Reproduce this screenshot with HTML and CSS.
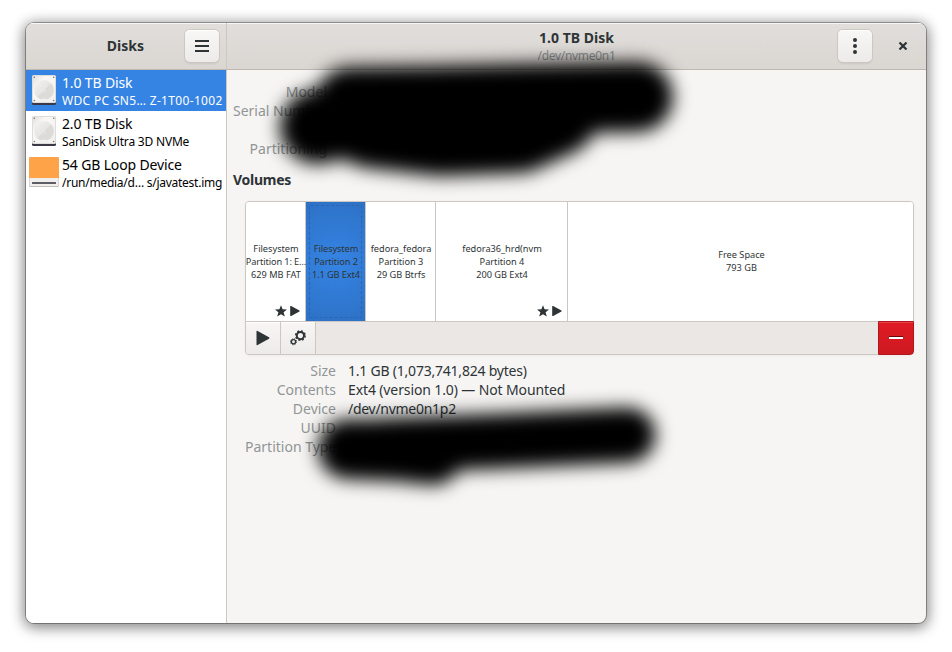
FILE: index.html
```html
<!DOCTYPE html>
<html lang="en">
<head>
<meta charset="utf-8">
<title>Disks</title>
<link rel="stylesheet" href="styles.css">
</head>
<body>
<svg class="defs" width="0" height="0" aria-hidden="true">
  <defs>
    <linearGradient id="metal" x1="0" y1="0" x2="1" y2="1"><stop offset="0" stop-color="#e0dfdc"/><stop offset=".3" stop-color="#f9f8f7"/><stop offset="1" stop-color="#f1f0ee"/></linearGradient>
    <linearGradient id="platter" x1="0" y1="0" x2="1" y2="1"><stop offset="0" stop-color="#f4f3f2"/><stop offset=".5" stop-color="#e6e5e2"/><stop offset=".52" stop-color="#dcdbd7"/><stop offset="1" stop-color="#dcdbd7"/></linearGradient>
    <symbol id="hdd" viewBox="0 0 24 30">
      <rect x="0" y="1" width="24" height="29" rx="1.5" fill="#3d3846"/>
      <rect x="0" y="0" width="24" height="28" rx="1.5" fill="#deddda"/>
      <rect x="1" y="1" width="22" height="26" rx="1" fill="url(#metal)"/>
      <circle cx="12" cy="15" r="10" fill="url(#platter)"/>
      <circle cx="12" cy="16" r="1.5" fill="#f3f2f0"/><circle cx="12" cy="16" r=".6" fill="#aaa"/>
      <path d="M8 27a4 3.500 0 0 1 8 0z" fill="#f1f0ee"/>
      <g fill="#77767b"><circle cx="2.3" cy="2.3" r=".8"/><circle cx="21.7" cy="2.3" r=".8"/><circle cx="2.3" cy="25.5" r=".8"/><circle cx="21.7" cy="25.5" r=".8"/></g>
    </symbol>
    <symbol id="loop" viewBox="0 0 30 30">
      <rect width="30" height="30" rx="1.5" fill="#c0bfbc"/>
      <rect x=".5" y="20" width="29" height="9" rx="1" fill="#f0efed"/>
      <path d="M0 21V1.5Q0 0 1.500 0H28.500Q30 0 30 1.500V21Z" fill="#ffa348"/>
      <rect x="3" y="25" width="24" height="2" rx=".5" fill="#5e5c64"/>
    </symbol>
    <symbol id="flags" viewBox="0 0 26 12">
      <path d="M6 .2 7.600 4.300 12 4.500 8.600 7.200 9.800 11.600 6 9.200 2.200 11.600 3.400 7.200 0 4.500 4.400 4.300Z" fill="#2e3436"/>
      <path d="M15.200 1.600Q15.200 .6 16.200 1L24.400 5.500Q25.200 6 24.400 6.500L16.200 11Q15.200 11.400 15.200 10.400Z" fill="#2e3436"/>
    </symbol>
  </defs>
</svg>
<main class="window">
  <header class="titlebar">
    <div class="side-head">
      <span class="title app">Disks</span>
      <button class="btn"><svg width="14" height="12"><path d="M0 1H14M0 6H14M0 11H14" stroke="#2e3436" stroke-width="2"/></svg></button>
    </div>
    <div class="main-head">
      <div class="titles"><div class="title disk">1.0 TB Disk</div><div class="subtitle">/dev/nvme0n1</div></div>
      <button class="btn menu"><svg width="4" height="16" fill="#2e3436"><circle cx="2" cy="2" r="2"/><circle cx="2" cy="8" r="2"/><circle cx="2" cy="14" r="2"/></svg></button>
      <button class="close"><svg width="10" height="8"><path d="M1.500 .5 8.500 7.500M8.500 .5 1.500 7.500" stroke="#2e3436" stroke-width="2.200"/></svg></button>
    </div>
  </header>
  <div class="body">
    <aside class="sidebar">
      <div class="device selected"><svg class="icon"><use href="#hdd"/></svg><div class="dtext"><div class="name n1">1.0 TB Disk</div><div class="info i1">WDC PC SN5… Z-1T00-1002</div></div></div>
      <div class="device"><svg class="icon"><use href="#hdd"/></svg><div class="dtext"><div class="name n2">2.0 TB Disk</div><div class="info i2">SanDisk Ultra 3D NVMe</div></div></div>
      <div class="device"><svg class="icon"><use href="#loop"/></svg><div class="dtext"><div class="name n3">54 GB Loop Device</div><div class="info i3">/run/media/d… s/javatest.img</div></div></div>
    </aside>
    <section class="content">
      <dl class="facts drive">
        <dt>Model</dt><dd></dd>
        <dt>Serial Number</dt><dd></dd>
        <dt></dt><dd></dd>
        <dt>Partitioning</dt><dd></dd>
      </dl>
      <h2>Volumes</h2>
      <div class="volumes">
        <div class="grid">
          <div class="part"><p>Filesystem</p><p class="wide">Partition 1: E…</p><p>629 MB FAT</p><svg class="flags"><use href="#flags"/></svg></div>
          <div class="part active"><p>Filesystem</p><p>Partition 2</p><p>1.1 GB Ext4</p></div>
          <div class="part"><p>fedora_fedora</p><p>Partition 3</p><p>29 GB Btrfs</p></div>
          <div class="part"><p>fedora36_hrd(nvm</p><p>Partition 4</p><p>200 GB Ext4</p><svg class="flags"><use href="#flags"/></svg></div>
          <div class="part"><p>Free Space</p><p>793 GB</p></div>
        </div>
        <div class="toolbar">
          <button class="tool"><svg width="14" height="16"><path d="M.5 1.600Q.5 .4 1.600 1L13 7.300Q14 8 13 8.700L1.600 15Q.5 15.600 .5 14.400Z" fill="#2e3436"/></svg></button>
          <button class="tool"><svg width="16" height="16" fill="none" stroke="#2e3436"><circle cx="10.400" cy="5.600" r="3.600" stroke-width="2"/><circle cx="10.400" cy="5.600" r="4.800" stroke-width="1.400" stroke-dasharray="1.900 1.870"/><circle cx="3.500" cy="11.800" r="2.100" stroke-width="1.300"/><circle cx="3.500" cy="11.800" r="3" stroke-width="1" stroke-dasharray="1.200 1.156"/></svg></button>
          <button class="remove"><svg width="14" height="4"><path d="M0 .5H14" stroke="#5e0b10"/><path d="M0 2H14" stroke="#fff" stroke-width="2"/></svg></button>
        </div>
      </div>
      <dl class="facts volume">
        <dt class="t1">Size</dt><dd class="v1">1.1 GB (1,073,741,824 bytes)</dd>
        <dt class="t2">Contents</dt><dd class="v2">Ext4 (version 1.0) — Not Mounted</dd>
        <dt class="t3">Device</dt><dd class="v3">/dev/nvme0n1p2</dd>
        <dt>UUID</dt><dd></dd>
        <dt class="t5">Partition Type</dt><dd></dd>
      </dl>
    </section>
  </div>
</main>
<svg class="redaction" width="952" height="652" viewBox="0 0 952 652" aria-hidden="true">
  <defs><filter id="soft" filterUnits="userSpaceOnUse" x="0" y="0" width="952" height="652"><feGaussianBlur stdDeviation="9"/></filter></defs>
  <g filter="url(#soft)" fill="none" stroke="#000" stroke-linecap="round" stroke-linejoin="round">
    <path d="M350 102 430 101 520 99 638 97" stroke-width="70"/>
    <path d="M317 127 350 120 370 131 440 139 520 136 560 118" stroke-width="74"/>
    <path d="M351 448 400 445 500 441 628 435" stroke-width="55"/>
    <path d="M348 449 395 451 433 455" stroke-width="60"/>
  </g>
</svg>
</body>
</html>
```
FILE: styles.css
```css
* { box-sizing: border-box; }
body { margin: 0; width: 952px; height: 652px; overflow: hidden; padding: 23px 0 0 26px; background: #fff; color: #2e3436; font: 14px/19px "Noto Sans", sans-serif; }
p, h2, dl, dd { margin: 0; }
svg { display: block; }
button { padding: 0; border: 0; display: flex; align-items: center; justify-content: center; font: inherit; }
.defs { position: absolute; }
.window { width: 900px; height: 600px; border-radius: 8px; background: #f6f5f4; overflow: hidden; box-shadow: 0 0 0 1px rgba(0,0,0,.3), 0 3px 14px 2px rgba(0,0,0,.42), 0 0 14px 2px rgba(0,0,0,.1); }
.titlebar { display: flex; height: 47px; background: linear-gradient(#e1dedb, #dad6d2); border-bottom: 1px solid #bfb8b1; box-shadow: inset 0 1px #f9f8f7; }
.side-head { width: 201px; border-right: 1px solid #cdc7c2; display: flex; align-items: center; justify-content: flex-end; padding-right: 7px; }
.title { font-weight: 700; white-space: nowrap; }
.app { margin: -2px 41px 0 0; }
.btn { width: 34px; height: 32px; border-radius: 5px; background: linear-gradient(#f8f7f6, #edebe9); box-shadow: 0 0 0 1px #cdc7c2, 0 2px 2px rgba(0,0,0,.08), inset 0 1px #fff; }
.main-head { flex: 1; display: grid; grid-template-columns: 1fr 34px 54px; align-items: center; }
.titles { padding-left: 88px; margin-top: 1px; text-align: center; line-height: 18px; }
.subtitle { font-size: 12px; color: #8b8e8f; letter-spacing: -.3px; }
.close { background: none; padding-left: 7px; }
.body { display: flex; height: 553px; }
.sidebar { width: 201px; background: #fff; border-right: 1px solid #cdc7c2; }
.device { height: 41px; display: flex; align-items: center; padding-left: 3px; gap: 3px; color: #000; }
.selected { background: #3584e4; color: #fff; }
.icon { width: 30px; height: 30px; flex: none; margin-top: -1px; }
.dtext { white-space: nowrap; line-height: 18px; padding-top: 3px; }
.name { letter-spacing: -.15px; }
.info { font-size: 12px; }
.i1 { letter-spacing: .33px; }
.i2 { letter-spacing: -.2px; }
.i3 { letter-spacing: -.26px; }
.content { width: 699px; }
.facts { display: grid; grid-auto-rows: 19px; column-gap: 12px; white-space: nowrap; }
.facts dt { text-align: right; color: #929595; }
.drive { grid-template-columns: 94px 1fr; padding: 12px 0 0 6px; }
h2 { font-size: 14px; line-height: 19px; margin: 12px 0 0 6px; letter-spacing: -.25px; }
.volumes { width: 669px; margin: 12px 0 0 18px; border: 1px solid #cdc7c2; border-radius: 4px; background: #ebe7e4; box-shadow: 0 1px 3px rgba(0,0,0,.04); }
.grid { height: 120px; display: grid; grid-template-columns: 60px 60px 70px 132px 345px; border-bottom: 1px solid #cdc7c2; border-radius: 3px 3px 0 0; overflow: hidden; }
.part { position: relative; background: #fff; border-right: 1px solid #cdc7c2; display: flex; flex-direction: column; align-items: center; justify-content: center; font-size: 9.200px; line-height: 13px; white-space: nowrap; padding-left: 1px; }
.part .wide { letter-spacing: -.1px; }
.part:last-child { border-right: 0; padding: 0 0 2px 2px; }
.active { background: radial-gradient(circle, #3584e4, #2d71c5); border-right-color: #cdc7c2; letter-spacing: -.1px; }
.active::after { content: ""; position: absolute; inset: 3px; border: 1px dashed #2a67b1; border-radius: 2px; }
.flags { position: absolute; width: 26px; height: 12px; right: 4px; bottom: 4px; }
.toolbar { display: flex; height: 32px; }
.tool { width: 35px; height: 32px; background: linear-gradient(#f7f6f5, #edebe9); border-right: 1px solid #cdc7c2; box-shadow: inset 0 1px #fff; }
.tool:first-child { border-radius: 0 0 0 3px; }
.remove { width: 36px; height: 34px; margin: -1px -1px -1px auto; border: 1px solid #b2161d; border-radius: 0 0 4px 0; background: linear-gradient(#e01b24, #cd1921); box-shadow: inset 0 1px #e7444b; }
.volume { grid-template-columns: 91px 1fr; padding: 6px 0 0 18px; }
.v1 { letter-spacing: -.22px; }
.v2 { letter-spacing: -.12px; }
.v3 { letter-spacing: -.28px; }
.redaction { position: absolute; left: 0; top: 0; pointer-events: none; }
```
